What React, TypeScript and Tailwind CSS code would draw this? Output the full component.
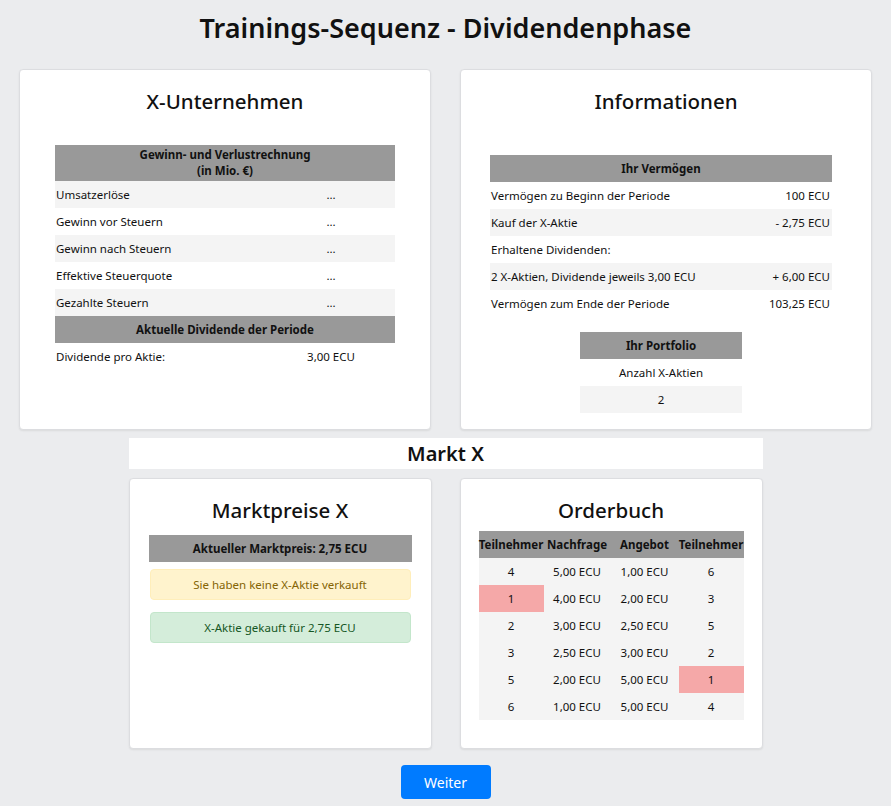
import React from 'react';

const font = { fontFamily: '"Noto Sans", "Open Sans", Arial, sans-serif' };

const guv = ['Umsatzerlöse', 'Gewinn vor Steuern', 'Gewinn nach Steuern', 'Effektive Steuerquote', 'Gezahlte Steuern'];

const vermoegen = [
  { label: 'Vermögen zu Beginn der Periode', value: '100 ECU' },
  { label: 'Kauf der X-Aktie', value: '- 2,75 ECU' },
  { label: 'Erhaltene Dividenden:', value: '' },
  { label: '2 X-Aktien, Dividende jeweils 3,00 ECU', value: '+ 6,00 ECU' },
  { label: 'Vermögen zum Ende der Periode', value: '103,25 ECU' },
];

const orders = [
  { buyer: '4', demand: '5,00 ECU', offer: '1,00 ECU', seller: '6', hlBuyer: false, hlSeller: false },
  { buyer: '1', demand: '4,00 ECU', offer: '2,00 ECU', seller: '3', hlBuyer: true, hlSeller: false },
  { buyer: '2', demand: '3,00 ECU', offer: '2,50 ECU', seller: '5', hlBuyer: false, hlSeller: false },
  { buyer: '3', demand: '2,50 ECU', offer: '3,00 ECU', seller: '2', hlBuyer: false, hlSeller: false },
  { buyer: '5', demand: '2,00 ECU', offer: '5,00 ECU', seller: '1', hlBuyer: false, hlSeller: true },
  { buyer: '6', demand: '1,00 ECU', offer: '5,00 ECU', seller: '4', hlBuyer: false, hlSeller: false },
];

const Card: React.FC<{ className?: string; children: React.ReactNode }> = ({ className = '', children }) => (
  <div className={`bg-white rounded border border-[#dcdde0] shadow-[0_1px_2px_rgba(0,0,0,0.08)] ${className}`}>
    {children}
  </div>
);

const App: React.FC = () => {
  return (
    <div style={font} className="min-h-[806px] bg-[#ebecee] text-[#111] text-[11.5px]">
      <h1 className="pt-[9px] text-center text-[27px] leading-[38px] font-semibold text-[#111]">
        Trainings-Sequenz - Dividendenphase
      </h1>

      <div className="mt-[22px] flex justify-center gap-[29px] px-[19px]">
        {/* X-Unternehmen */}
        <Card className="w-[413px] h-[361px]">
          <h2 className="mt-[17px] text-center text-[20.5px] leading-[28px] font-medium">X-Unternehmen</h2>
          <table className="mx-auto mt-[30px] w-[340px] border-collapse">
            <thead>
              <tr className="bg-[#999999]">
                <th colSpan={2} className="h-[36px] text-center leading-[16px] font-bold">
                  Gewinn- und Verlustrechnung
                  <br />
                  (in Mio. €)
                </th>
              </tr>
            </thead>
            <tbody>
              {guv.map((label, i) => (
                <tr key={label} className={i % 2 === 0 ? 'bg-[#f4f4f4]' : 'bg-white'}>
                  <td className="h-[27px] pl-[1px] w-[212px]">{label}</td>
                  <td className="h-[27px] text-center">...</td>
                </tr>
              ))}
              <tr className="bg-[#999999]">
                <th colSpan={2} className="h-[27px] text-center font-bold">Aktuelle Dividende der Periode</th>
              </tr>
              <tr>
                <td className="h-[27px] pl-[1px]">Dividende pro Aktie:</td>
                <td className="h-[27px] text-center">3,00 ECU</td>
              </tr>
            </tbody>
          </table>
        </Card>

        {/* Informationen */}
        <Card className="w-[413px] h-[361px]">
          <h2 className="mt-[17px] text-center text-[20.5px] leading-[28px] font-medium">Informationen</h2>
          <div className="pr-[10px]">
            <table className="mx-auto mt-[40px] w-[342px] border-collapse">
              <thead>
                <tr className="bg-[#999999]">
                  <th colSpan={2} className="h-[27px] text-center font-bold">Ihr Vermögen</th>
                </tr>
              </thead>
              <tbody>
                {vermoegen.map((row, i) => (
                  <tr key={row.label} className={i % 2 === 1 ? 'bg-[#f4f4f4]' : 'bg-white'}>
                    <td className="h-[27px] pl-[1px]">{row.label}</td>
                    <td className="h-[27px] pr-[2px] text-right">{row.value}</td>
                  </tr>
                ))}
              </tbody>
            </table>
            <table className="mx-auto mt-[15px] w-[162px] border-collapse">
              <thead>
                <tr className="bg-[#999999]">
                  <th className="h-[27px] text-center font-bold">Ihr Portfolio</th>
                </tr>
              </thead>
              <tbody>
                <tr>
                  <td className="h-[27px] text-center">Anzahl X-Aktien</td>
                </tr>
                <tr className="bg-[#f4f4f4]">
                  <td className="h-[27px] text-center">2</td>
                </tr>
              </tbody>
            </table>
          </div>
        </Card>
      </div>

      <div className="mx-auto mt-[8px] w-[634px] h-[31px] bg-white flex items-center justify-center">
        <h2 className="text-[20px] leading-[28px] font-semibold">Markt X</h2>
      </div>

      <div className="mt-[9px] flex justify-center gap-[28px]">
        {/* Marktpreise */}
        <Card className="w-[303px] h-[271px]">
          <h2 className="mt-[17px] text-center text-[20.5px] leading-[28px] font-medium">Marktpreise X</h2>
          <div className="mx-[19px] mt-[11px] h-[27px] bg-[#999999] flex items-center justify-center font-bold">
            Aktueller Marktpreis: 2,75 ECU
          </div>
          <div className="mx-[20px] mt-[7px] h-[31px] rounded border border-[#ffeeba] bg-[#fff3cd] text-[#856404] flex items-center justify-center">
            Sie haben keine X-Aktie verkauft
          </div>
          <div className="mx-[20px] mt-[12px] h-[31px] rounded border border-[#c3e6cb] bg-[#d4edda] text-[#155724] flex items-center justify-center">
            X-Aktie gekauft für 2,75 ECU
          </div>
        </Card>

        {/* Orderbuch */}
        <Card className="w-[303px] h-[271px]">
          <h2 className="mt-[17px] text-center text-[20.5px] leading-[28px] font-medium">Orderbuch</h2>
          <table className="mx-auto mt-[7px] w-[265px] border-collapse">
            <thead>
              <tr className="bg-[#999999]">
                <th className="h-[27px] w-[65px] text-center font-bold">Teilnehmer</th>
                <th className="h-[27px] w-[67px] text-center font-bold">Nachfrage</th>
                <th className="h-[27px] w-[68px] text-center font-bold">Angebot</th>
                <th className="h-[27px] w-[65px] text-center font-bold">Teilnehmer</th>
              </tr>
            </thead>
            <tbody>
              {orders.map((o, i) => (
                <tr key={i} className="bg-[#f4f4f4]">
                  <td className={`h-[27px] text-center ${o.hlBuyer ? 'bg-[#f5a8a8]' : ''}`}>{o.buyer}</td>
                  <td className="h-[27px] text-center">{o.demand}</td>
                  <td className="h-[27px] text-center">{o.offer}</td>
                  <td className={`h-[27px] text-center ${o.hlSeller ? 'bg-[#f5a8a8]' : ''}`}>{o.seller}</td>
                </tr>
              ))}
            </tbody>
          </table>
        </Card>
      </div>

      <div className="mt-[16px] flex justify-center">
        <button className="w-[90px] h-[34px] rounded bg-[#007bff] text-white text-[14px]">Weiter</button>
      </div>
    </div>
  );
};

export default App;
